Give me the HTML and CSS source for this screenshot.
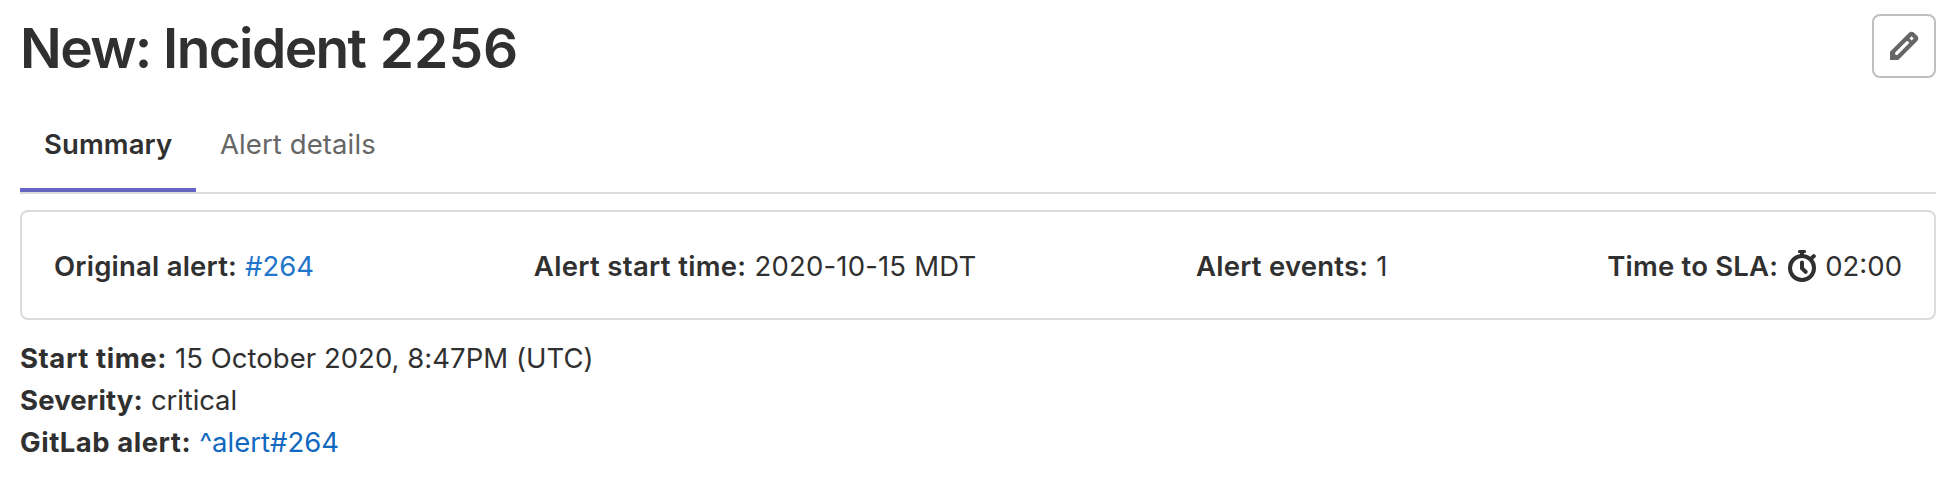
FILE: index.html
```html
<!DOCTYPE html>
<html lang="en">
<head>
<meta charset="utf-8">
<title>New: Incident 2256</title>
<link rel="stylesheet" href="styles.css">
</head>
<body>
<main class="page">
  <header class="header">
    <h1 class="title">New: Incident <span class="number">2256</span></h1>
    <button class="edit" aria-label="Edit">
      <svg class="icon" viewBox="0 0 16 16"><path fill="currentColor" fill-rule="evenodd" d="M1 10.9 10.4 1.5a2 2 0 0 1 2.8 0L14.5 2.8a2 2 0 0 1 0 2.8L5.1 15H1zM3.75 11.1a.8.8 0 0 0 1.15 1.15L10.25 6.9a.8.8 0 0 0-1.15-1.15zM11.8 3.15 10.75 4.2 11.8 5.25 12.85 4.2z"/></svg>
    </button>
  </header>
  <nav class="tabs">
    <a class="tab active">Summary</a>
    <a class="tab">Alert details</a>
  </nav>
  <section class="card">
    <div class="item"><strong class="l-original">Original alert:</strong><a class="link">#264</a></div>
    <div class="item"><strong class="l-start">Alert start time:</strong><span class="v-date">2020-10-15 MDT</span></div>
    <div class="item"><strong class="l-events">Alert events:</strong><span>1</span></div>
    <div class="item"><strong class="l-sla">Time to SLA:</strong><svg class="icon watch" viewBox="0 0 16 16"><g fill="none" stroke="currentColor" stroke-width="2" stroke-linecap="round" stroke-linejoin="round"><circle cx="8" cy="9" r="6"/><path d="M8 6.2V9.2L9.8 10.9M13.9 3.1 12.9 4.1"/></g><path fill="currentColor" d="M6.7 0h2.6a.7.7 0 0 1 0 1.5H9V3H7V1.500H6.700a.7.7 0 0 1 0-1.500z"/></svg><span>02:00</span></div>
  </section>
  <section class="details">
    <div class="item"><strong class="l-time">Start time:</strong><span class="v-time">15 October 2020, 8:47PM (UTC)</span></div>
    <div class="item"><strong class="l-severity">Severity:</strong><span class="v-severity">critical</span></div>
    <div class="item"><strong class="l-gitlab">GitLab alert:</strong><a class="link dark">^alert#264</a></div>
  </section>
</main>
</body>
</html>
```
FILE: styles.css
```css
* { box-sizing: border-box; }
body {
  margin: 0;
  background: #fff;
  color: #303030;
  font: 400 27.5px/42px Inter, "Liberation Sans", sans-serif;
}
.page { padding: 14px 20px 0; }
.header { display: flex; justify-content: space-between; height: 86px; }
.title { margin: 0; font-size: 55px; line-height: 68px; font-weight: 600; letter-spacing: -1.6px; }
.number { margin-left: 2px; letter-spacing: 0.1px; }
.edit {
  display: flex; align-items: center; justify-content: center;
  width: 64px; height: 64px; padding: 0;
  background: #fff; border: 2px solid #bfbfbf; border-radius: 8px; color: #666;
}
.icon { width: 32px; height: 32px; flex: none; }
.tabs { display: flex; height: 94px; border-bottom: 2px solid #dbdbdb; }
.tab { display: flex; padding: 23px 24px 0; color: #666; letter-spacing: 0.1px; }
.tab.active { width: 176px; color: #303030; font-weight: 600; border-bottom: 4px solid #6666c4; }
.card {
  display: flex; justify-content: space-between;
  margin-top: 16px; height: 110px; padding: 33px 32px;
  border: 2px solid #dbdbdb; border-radius: 8px;
}
.item { display: flex; white-space: nowrap; gap: 8px; }
.item strong { font-weight: 600; }
.l-original { letter-spacing: 0.22px; }
.l-start { letter-spacing: 0.33px; }
.l-events { letter-spacing: 0.22px; }
.l-sla { letter-spacing: 0.2px; }
.v-date { letter-spacing: 0.18px; }
.watch { margin: 5px -1px 0 0; }
.link { color: #1f75cb; }
.link.dark { color: #1068bf; }
.details { padding-top: 17px; }
.details .item strong { font-weight: 700; }
.l-time { letter-spacing: 0.58px; }
.v-time { letter-spacing: 0.03px; }
.l-severity { letter-spacing: 0.15px; }
.l-gitlab { letter-spacing: 0.52px; }
.v-severity { letter-spacing: -0.1px; }
```
